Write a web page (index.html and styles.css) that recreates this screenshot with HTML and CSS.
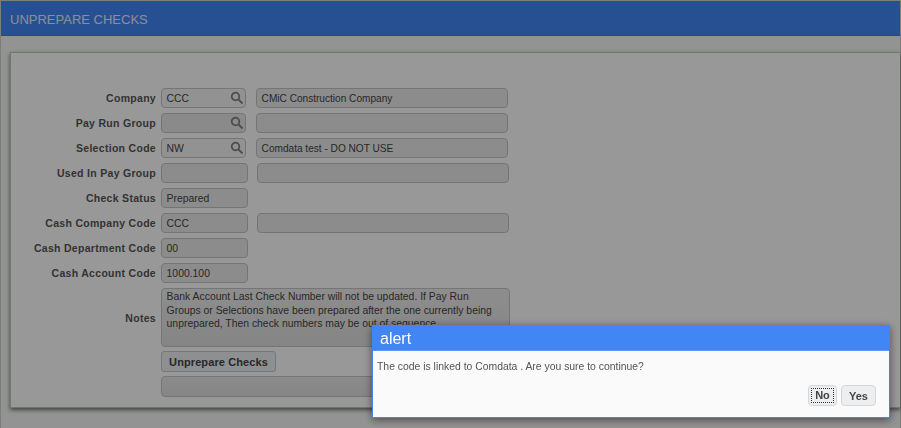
FILE: index.html
```html
<!DOCTYPE html>
<html lang="en">
<head>
<meta charset="utf-8">
<title>Unprepare Checks</title>
<link rel="stylesheet" href="styles.css">
</head>
<body>
<div class="app">
  <header class="topbar">UNPREPARE CHECKS</header>
  <main class="content">
    <section class="panel">
      <div class="form">
        <div class="row"><label class="lbl">Company</label><div class="field search">CCC<svg class="mag" viewBox="0 0 14 14"><circle cx="5.5" cy="5.5" r="3.8"/><path d="M8.5 8.5L12.5 12.5"/></svg></div><div class="field desc">CMiC Construction Company</div></div>
        <div class="row"><label class="lbl">Pay Run Group</label><div class="field search off"><svg class="mag" viewBox="0 0 14 14"><circle cx="5.5" cy="5.5" r="3.8"/><path d="M8.5 8.5L12.5 12.5"/></svg></div><div class="field desc"></div></div>
        <div class="row"><label class="lbl">Selection Code</label><div class="field search">NW<svg class="mag" viewBox="0 0 14 14"><circle cx="5.5" cy="5.5" r="3.8"/><path d="M8.5 8.5L12.5 12.5"/></svg></div><div class="field desc">Comdata test - DO NOT USE</div></div>
        <div class="row"><label class="lbl">Used In Pay Group</label><div class="field plain"></div><div class="field desc"></div></div>
        <div class="row"><label class="lbl">Check Status</label><div class="field plain">Prepared</div></div>
        <div class="row"><label class="lbl">Cash Company Code</label><div class="field plain">CCC</div><div class="field desc"></div></div>
        <div class="row"><label class="lbl">Cash Department Code</label><div class="field plain">00</div></div>
        <div class="row"><label class="lbl">Cash Account Code</label><div class="field plain">1000.100</div></div>
        <div class="row notes"><label class="lbl">Notes</label><div class="field area">Bank Account Last Check Number will not be updated. If Pay Run Groups or Selections have been prepared after the one currently being unprepared, Then check numbers may be out of sequence.</div></div>
        <div class="row btnrow"><span class="lbl"></span><button class="btn">Unprepare Checks</button></div>
        <div class="row last"><span class="lbl"></span><div class="field status"></div></div>
      </div>
    </section>
  </main>
</div>
<div class="overlay"></div>
<div class="dialog" role="alertdialog">
  <div class="dlg-title">alert</div>
  <div class="dlg-body">
    <p class="dlg-msg">The code is linked to Comdata . Are you sure to continue?</p>
    <div class="dlg-actions"><button class="dbtn focus"><span>No</span></button><button class="dbtn yes">Yes</button></div>
  </div>
</div>
</body>
</html>
```
FILE: styles.css
```css
* { box-sizing: border-box; }
html, body { margin: 0; padding: 0; height: 100%; overflow: hidden; }
body { font-family: "Liberation Sans", Arial, sans-serif; font-size: 10.4px; color: #555; background: #f3f6f3; }
.app { height: 428px; border: 1px solid #cfd2cf; border-bottom: 0; display: flex; flex-direction: column; }
.topbar { height: 35px; flex: none; background: #4285f4; border-bottom: 1px solid #3f7be0; color: #e6eefc; font-size: 13px; line-height: 37px; padding-left: 9px; }
.content { flex: 1; padding: 16px 0 20px 9px; }
.panel { height: 356px; background: #fefefe; border: 1px solid #c4c4c4; border-right: 0; box-shadow: 0 2px 4px rgba(0,0,0,.55); padding-top: 35px; }
.form { display: flex; flex-direction: column; }
.row { display: flex; align-items: center; height: 20px; margin-bottom: 5px; }
.lbl { width: 145px; flex: none; text-align: right; font-weight: bold; font-size: 10.5px; line-height: 22px; margin-right: 5px; letter-spacing: .3px; }
.field { height: 20px; background: #ececec; border: 1px solid #c4c4c4; border-radius: 4px; padding-left: 4.6px; line-height: 20px; color: #444; position: relative; }
.search { width: 85px; margin-right: 10px; background: #f4f4f4; }
.search.off { background: #e6e6e6; }
.plain { width: 87px; margin-right: 9px; background: #e9e9e9; }
.desc { width: 252px; background: #e9e9e9; font-size: 10.1px; }
.mag { position: absolute; right: 1px; top: 2px; width: 14px; height: 14px; fill: none; stroke: #808080; stroke-width: 1.8; }
.notes { height: 59px; margin-bottom: 4px; }
.area { width: 349px; height: 59px; line-height: 13.5px; padding-top: 1px; padding-right: 12px; background: linear-gradient(#ececec, #dedede); }
.btnrow { height: 21px; margin-bottom: 4px; }
.btn { width: 115px; height: 21px; padding: 0; background: #eceef0; border: 1px solid #c4c6c8; border-radius: 3px; font: bold 11px "Liberation Sans", Arial, sans-serif; letter-spacing: .1px; color: #444; }
.last { height: 21px; }
.status { width: 560px; height: 21px; background: linear-gradient(#e8e8e8, #dedede); }
.overlay { position: fixed; inset: 0; background: rgba(0,0,0,.4); }
.dialog { position: fixed; left: 372px; top: 325px; width: 518px; height: 93px; background: #fafafa; border: 1px solid #4285f4; box-shadow: 0 2px 8px rgba(0,0,0,.5); display: flex; flex-direction: column; }
.dlg-title { height: 25px; flex: none; background: #4285f4; color: #fff; font-size: 16px; line-height: 25px; padding-left: 7px; border-bottom: 1px solid #5c96f5; }
.dlg-body { flex: 1; display: flex; flex-direction: column; justify-content: space-between; padding: 9px 13px 11px 4px; }
.dlg-msg { margin: 0; color: #555; line-height: 13px; }
.dlg-actions { display: flex; justify-content: flex-end; gap: 4px; }
.dbtn { height: 21px; padding: 0; background: #eceef0; border: 1px solid #d4d6d8; border-radius: 4px; font: bold 11px "Liberation Sans", Arial, sans-serif; color: #444; }
.yes { width: 35px; }
.focus { width: 29px; padding: 2px; }
.focus span { display: block; height: 100%; line-height: 13px; border: 1px dotted #333; }
```
